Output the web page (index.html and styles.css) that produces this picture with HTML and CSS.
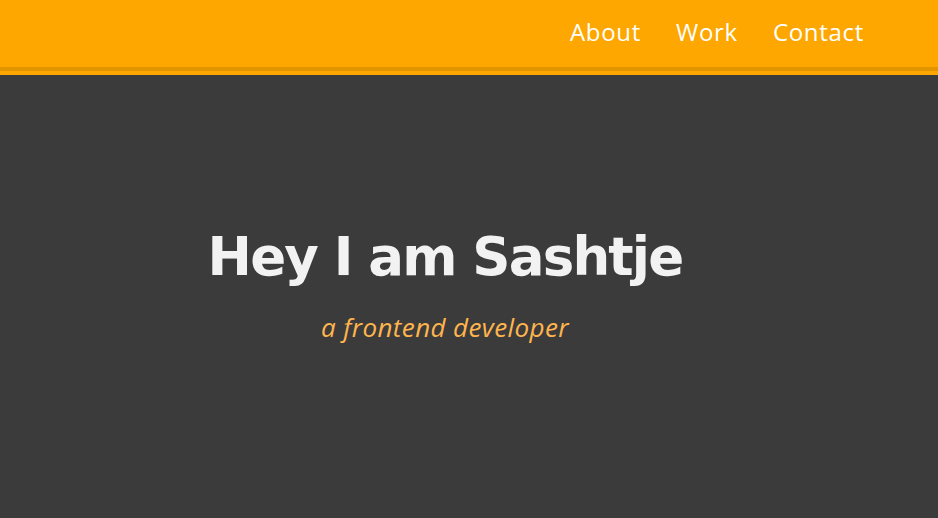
FILE: index.html
```html
<!DOCTYPE html>
<html lang="en">
<head>
<meta charset="utf-8">
<title>Sashtje</title>
<link rel="stylesheet" href="styles.css">
</head>
<body>
<header class="topbar">
  <nav class="nav">
    <a href="#about" class="nav-link">About</a>
    <a href="#work" class="nav-link">Work</a>
    <a href="#contact" class="nav-link">Contact</a>
  </nav>
</header>
<main class="hero">
  <h1 class="hero-title">Hey I am Sashtje</h1>
  <p class="hero-sub">a frontend developer</p>
</main>
</body>
</html>
```
FILE: styles.css
```css
html, body {
  margin: 0;
  padding: 0;
  height: 100%;
}
body {
  background: #3b3b3b;
  font-family: "DejaVu Sans", "Open Sans", sans-serif;
}
.topbar {
  background: #fea700;
  height: 67px;
  border-bottom: 4px solid #e39500;
  box-shadow: 0 4px 0 #fea700;
  display: flex;
  justify-content: flex-end;
  align-items: center;
  padding-right: 74px;
}
.nav {
  display: flex;
  gap: 35px;
  margin-top: -3px;
}
.nav-link {
  color: #ffffff;
  text-decoration: none;
  font-family: "Open Sans", sans-serif;
  font-size: 24px;
  letter-spacing: 0.7px;
  line-height: 1;
}
.hero {
  display: flex;
  flex-direction: column;
  align-items: center;
  padding-top: 146px;
  padding-right: 48px;
}
.hero-title {
  margin: 0;
  color: #f2f2f2;
  font-family: "DejaVu Sans", sans-serif;
  font-weight: bold;
  font-size: 53px;
  letter-spacing: -1.8px;
  line-height: 80px;
}
.hero-sub {
  margin: 12px 0 0;
  color: #ffb54d;
  font-family: "Open Sans", sans-serif;
  font-style: italic;
  font-size: 26px;
  letter-spacing: 0.4px;
}
```
